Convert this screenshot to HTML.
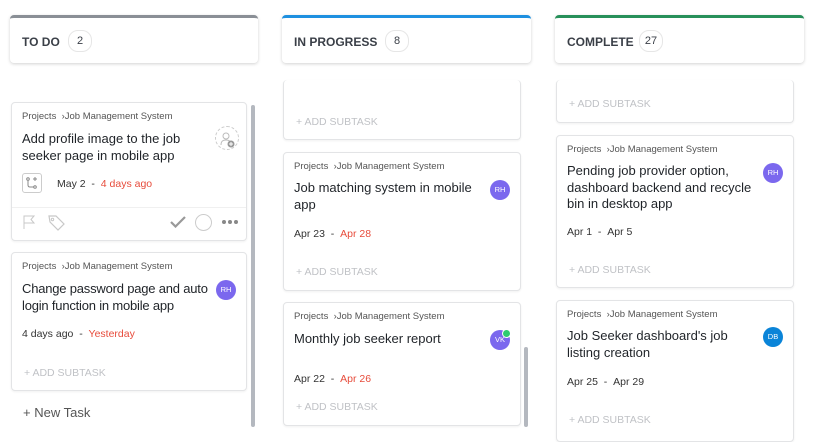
<!DOCTYPE html><html><head><style>
body{margin:0;width:814px;height:427px;overflow:hidden;background:#fff;font-family:"Liberation Sans",sans-serif;color:#292d34;position:relative}
.h{position:absolute;top:15px;height:45px;border-radius:4px;box-shadow:0 1px 3px rgba(0,0,0,.18);border-top:3px solid;background:#fff;font-size:12px;font-weight:bold;color:#3a3f47}
.h span.t{position:absolute;left:12px;top:17px}
.h .n{position:absolute;top:12px;width:22px;height:20px;border:1px solid #e6e6e6;border-radius:10px;text-align:center;line-height:20px;font-size:11px;font-weight:normal}
.c{position:absolute;background:#fff;border:1px solid #e3e4e6;border-radius:4px;box-shadow:0 1px 2px rgba(0,0,0,.06)}
.bc{position:absolute;left:10px;top:8px;font-size:9.5px;color:#555}
.ti{position:absolute;left:10px;font-size:13px;line-height:16.5px;color:#1f2328}
.d{position:absolute;left:10px;font-size:10.5px;color:#333}
.r{color:#e74c3c}
.as{position:absolute;left:12px;font-size:10.5px;color:#c0c2c6}
.av{position:absolute;right:10px;width:20px;height:20px;border-radius:50%;color:#fff;font-size:7.5px;text-align:center;line-height:20px}
.sb{position:absolute;width:4px;background:#b4b8bf;border-radius:2px}
</style></head><body>
<div class="h" style="left:10px;width:248px;border-color:#8a8f96"><span class="t">TO DO</span><span class="n" style="left:58px">2</span></div>
<div class="h" style="left:282px;width:249px;border-color:#1e90e0"><span class="t">IN PROGRESS</span><span class="n" style="left:103px">8</span></div>
<div class="h" style="left:555px;width:249px;border-color:#27905a"><span class="t">COMPLETE</span><span class="n" style="left:84px">27</span></div>

<div class="c" style="left:11px;top:102px;width:234px;height:137px">
<div class="bc">Projects &nbsp;›Job Management System</div>
<div class="ti" style="top:28px">Add profile image to the job<br>seeker page in mobile app</div>
<div style="position:absolute;right:7px;top:23px;width:22px;height:22px;border:1px dashed #ccc;border-radius:50%"></div>
<svg style="position:absolute;right:10px;top:28px" width="18" height="18" viewBox="0 0 18 18"><circle cx="8" cy="5" r="3" fill="none" stroke="#bbb"/><path d="M3 14c0-4 2-5 5-5s5 1 5 5" fill="none" stroke="#bbb"/><circle cx="13" cy="13" r="3.5" fill="#999"/><path d="M13 11v4M11 13h4" stroke="#fff"/></svg>
<div style="position:absolute;left:10px;top:70px;width:18px;height:18px;border:1px solid #ccc;border-radius:3px"></div>
<svg style="position:absolute;left:13px;top:73px" width="14" height="14" viewBox="0 0 14 14"><circle cx="3" cy="3" r="1.3" fill="none" stroke="#888"/><circle cx="10" cy="11" r="1.3" fill="none" stroke="#888"/><path d="M3 4.5v4.5q0 2 2 2h3.5M10 1v4M8 3h4" fill="none" stroke="#888"/></svg>
<div class="d" style="left:45px;top:75px">May 2 &nbsp;- &nbsp;<span class="r">4 days ago</span></div>
<div style="position:absolute;left:0;right:0;top:104px;border-top:1px solid #f0f0f0"></div>
<svg style="position:absolute;left:10px;top:112px" width="14" height="14" viewBox="0 0 14 14"><path d="M2 14V1h10l-3 3.5 3 3.5H2" fill="none" stroke="#c8c8c8"/></svg>
<svg style="position:absolute;left:35px;top:110px" width="20" height="18" viewBox="0 0 20 18"><path d="M2 3h7l8 8-6 6-8-8z" fill="none" stroke="#c8c8c8" stroke-width="1.2"/><circle cx="5.5" cy="6.5" r="1.2" fill="none" stroke="#c8c8c8"/></svg>
<svg style="position:absolute;left:158px;top:113px" width="16" height="12" viewBox="0 0 16 12"><path d="M1 6l4.5 4.5L15 1" fill="none" stroke="#999" stroke-width="2.2"/></svg>
<div style="position:absolute;left:183px;top:111px;width:15px;height:15px;border:1px solid #ccc;border-radius:50%"></div>
<div style="position:absolute;left:210px;top:117px;display:flex;gap:2px"><i style="width:4px;height:4px;border-radius:50%;background:#888"></i><i style="width:4px;height:4px;border-radius:50%;background:#888"></i><i style="width:4px;height:4px;border-radius:50%;background:#888"></i></div>
</div>
<div class="c" style="left:11px;top:252px;width:234px;height:137px">
<div class="bc">Projects &nbsp;›Job Management System</div>
<div class="ti" style="top:28px;letter-spacing:-0.2px">Change password page and auto<br>login function in mobile app</div>
<div class="av" style="top:27px;background:#7b68ee">RH</div>
<div class="d" style="top:75px">4 days ago &nbsp;- &nbsp;<span class="r">Yesterday</span></div>
<div class="as" style="top:114px">+ ADD SUBTASK</div>
</div>
<div style="position:absolute;left:23px;top:405px;font-size:13px;color:#555">+ New Task</div>
<div class="sb" style="left:251px;top:105px;height:322px"></div>

<div class="c" style="left:283px;top:80px;width:236px;height:59px;border-top:none">
<div class="as" style="top:36px">+ ADD SUBTASK</div></div>
<div class="c" style="left:283px;top:152px;width:236px;height:137px">
<div class="bc">Projects &nbsp;›Job Management System</div>
<div class="ti" style="top:27px">Job matching system in mobile<br>app</div>
<div class="av" style="top:27px;background:#7b68ee">RH</div>
<div class="d" style="top:75px">Apr 23 &nbsp;- &nbsp;<span class="r">Apr 28</span></div>
<div class="as" style="top:113px">+ ADD SUBTASK</div>
</div>
<div class="c" style="left:283px;top:302px;width:236px;height:122px">
<div class="bc">Projects &nbsp;›Job Management System</div>
<div class="ti" style="top:28px">Monthly job seeker report</div>
<div class="av" style="top:27px;background:#7b68ee">VK</div>
<div style="position:absolute;right:9px;top:26px;width:7px;height:7px;border-radius:50%;background:#2ecc71;border:1px solid #fff"></div>
<div class="d" style="top:70px">Apr 22 &nbsp;- &nbsp;<span class="r">Apr 26</span></div>
<div class="as" style="top:98px">+ ADD SUBTASK</div>
</div>
<div class="sb" style="left:524px;top:347px;height:80px"></div>

<div class="c" style="left:556px;top:80px;width:236px;height:42px;border-top:none">
<div class="as" style="top:18px">+ ADD SUBTASK</div></div>
<div class="c" style="left:556px;top:135px;width:236px;height:151px">
<div class="bc">Projects &nbsp;›Job Management System</div>
<div class="ti" style="top:27px">Pending job provider option,<br>dashboard backend and recycle<br>bin in desktop app</div>
<div class="av" style="top:27px;background:#7b68ee">RH</div>
<div class="d" style="top:90px">Apr 1 &nbsp;- &nbsp;Apr 5</div>
<div class="as" style="top:128px">+ ADD SUBTASK</div>
</div>
<div class="c" style="left:556px;top:300px;width:236px;height:140px">
<div class="bc">Projects &nbsp;›Job Management System</div>
<div class="ti" style="top:27px">Job Seeker dashboard's job<br>listing creation</div>
<div class="av" style="top:26px;background:#0a84d8">DB</div>
<div class="d" style="top:75px">Apr 25 &nbsp;- &nbsp;Apr 29</div>
<div class="as" style="top:113px">+ ADD SUBTASK</div>
</div>
</body></html>
